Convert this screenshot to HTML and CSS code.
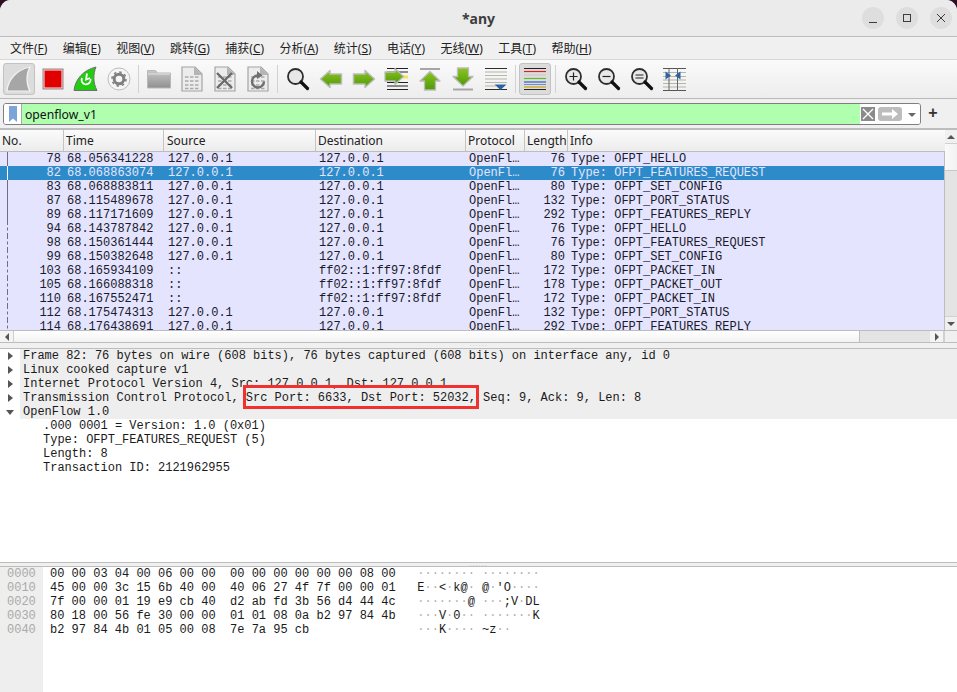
FILE: index.html
```html
<!DOCTYPE html>
<html lang="zh">
<head>
<meta charset="utf-8">
<title>*any</title>
<link rel="stylesheet" href="styles.css">
</head>
<body>
<svg class="defs" width="0" height="0">
  <defs>
    <linearGradient id="gr" x1="0" y1="0" x2="0" y2="1"><stop offset="0" stop-color="#8cc420"/><stop offset="1" stop-color="#4e9a06"/></linearGradient>
    <linearGradient id="fo" x1="0" y1="0" x2="0" y2="1"><stop offset="0" stop-color="#c8c8c8"/><stop offset="1" stop-color="#8f8f8f"/></linearGradient>
    <g id="page">
      <path d="M2 1h13l7 7v17H2z" fill="#ececec" stroke="#a4a4a4" stroke-width="1.200"/>
      <path d="M14 1v8h8z" fill="#b4b4b4"/>
      <path d="M5 11h3.500M10 11h3.500M15 11h3.500M5 15h3.500M10 15h3.500M15 15h3.500M5 19h3.500M10 19h3.500M15 19h3.500M5 22.500h3.500M10 22.500h3.500M15 22.500h3.500" stroke="#a9a9a9" stroke-width="1.500" fill="none"/>
    </g>
    <g id="lens">
      <circle cx="9.500" cy="9.500" r="7.500" fill="#e8e8e8" stroke="#2e2e2e" stroke-width="1.800"/>
      <path d="M15 15l6.500 6.500" stroke="#111" stroke-width="3.200" stroke-linecap="round"/>
    </g>
  </defs>
</svg>
<div class="window">
  <header class="titlebar">
    <h1 class="title">*any</h1>
    <div class="winctl">
      <span class="winbtn"><svg width="22" height="22"><path d="M7 15.500h8" stroke="#3d3d3d" stroke-width="1"/></svg></span>
      <span class="winbtn"><svg width="22" height="22"><rect x="7.500" y="7.500" width="7" height="7" fill="none" stroke="#3d3d3d"/></svg></span>
      <span class="winbtn"><svg width="22" height="22"><path d="M7 7l8 8M15 7l-8 8" stroke="#3d3d3d"/></svg></span>
    </div>
  </header>

  <nav class="menubar">
    <span class="menu">文件(<u>F</u>)</span>
    <span class="menu">编辑(<u>E</u>)</span>
    <span class="menu">视图(<u>V</u>)</span>
    <span class="menu">跳转(<u>G</u>)</span>
    <span class="menu">捕获(<u>C</u>)</span>
    <span class="menu">分析(<u>A</u>)</span>
    <span class="menu">统计(<u>S</u>)</span>
    <span class="menu">电话(<u>Y</u>)</span>
    <span class="menu">无线(<u>W</u>)</span>
    <span class="menu">工具(<u>T</u>)</span>
    <span class="menu">帮助(<u>H</u>)</span>
  </nav>

  <div class="toolbar">
    <span class="tool on"><svg width="28" height="28" viewBox="0 0 28 28"><path d="M2 26C3 15 11 5 25 2c-4 7-4 17 0 24z" fill="#a6a6a6" stroke="#f3f3f3" stroke-width="1.200"/></svg></span>
    <span class="tool"><svg width="24" height="24" viewBox="0 0 24 24"><rect x="2" y="2" width="20" height="20" fill="#e00000" stroke="#8c8c8c" stroke-width="1"/><rect x="3" y="3" width="18" height="18" fill="none" stroke="#eee" stroke-width="1"/></svg></span>
    <span class="tool"><svg width="26" height="26" viewBox="0 0 26 26"><path d="M1 24.500C2 14 10 4 23 1c-3 7-3 16 1 23.500z" fill="#22cc11" stroke="#6e6e6e" stroke-width="1"/><path d="M14 7.500l-1 6 4-1.500" fill="none" stroke="#fff" stroke-width="1.800"/><path d="M17.500 13a4.500 4.500 0 1 1-8.500-1" fill="none" stroke="#fff" stroke-width="1.800"/></svg></span>
    <span class="tool"><svg width="24" height="24" viewBox="0 0 24 24"><circle cx="12" cy="12" r="11" fill="#f6f6f6" stroke="#bcbcbc"/><circle cx="12" cy="12" r="4.800" fill="none" stroke="#808080" stroke-width="3"/><circle cx="12" cy="12" r="7" fill="none" stroke="#808080" stroke-width="1.600" stroke-dasharray="2.500 3"/></svg></span>
    <span class="sep"></span>
    <span class="tool"><svg width="24" height="20" viewBox="0 0 24 20"><path d="M.5 19V1.500h8l2 2.500h13v15z" fill="url(#fo)" stroke="#b8b8b8"/><path d="M1 5h22" stroke="#e4e4e4"/></svg></span>
    <span class="tool"><svg width="24" height="26" viewBox="0 0 24 26"><use href="#page"/></svg></span>
    <span class="tool"><svg width="24" height="26" viewBox="0 0 24 26"><use href="#page"/><path d="M4 7l15 15M19 7L4 22" stroke="#6a6a6a" stroke-width="2.400"/></svg></span>
    <span class="tool"><svg width="24" height="26" viewBox="0 0 24 26"><use href="#page"/><path d="M18 15.500a6 6 0 1 1-6-6" fill="none" stroke="#6f6f6f" stroke-width="2.400"/><path d="M11 5l5.500 4.500L11 13z" fill="#6f6f6f"/></svg></span>
    <span class="sep"></span>
    <span class="tool"><svg width="24" height="24" viewBox="0 0 24 24"><use href="#lens"/></svg></span>
    <span class="tool"><svg width="24" height="20" viewBox="0 0 24 20"><path d="M1.500 10L11 1.500V5h11.500v10H11v3.500z" fill="url(#gr)" stroke="#bcbcbc" stroke-width="1.500" stroke-linejoin="round"/></svg></span>
    <span class="tool"><svg width="24" height="20" viewBox="0 0 24 20"><path d="M22.500 10L13 1.500V5H1.500v10H13v3.500z" fill="url(#gr)" stroke="#bcbcbc" stroke-width="1.500" stroke-linejoin="round"/></svg></span>
    <span class="tool"><svg width="25" height="24" viewBox="0 0 25 24"><path d="M3 1.500h21M3 5h21" stroke="#222"/><path d="M16 8.500h8v3h-8z" fill="#f7e34f"/><path d="M3 15.500h21M3 19h21M3 22.500h21" stroke="#222"/><path d="M1 5h10V1.500l8.500 8-8.500 8V14H1z" fill="url(#gr)" stroke="#bcbcbc" stroke-width="1.300" stroke-linejoin="round"/></svg></span>
    <span class="tool"><svg width="24" height="24" viewBox="0 0 24 24"><path d="M2 2h20" stroke="#a6a6a6" stroke-width="2"/><path d="M12 4.500l10 9.500h-4.500v9h-11v-9H2z" fill="url(#gr)" stroke="#bcbcbc" stroke-width="1.300" stroke-linejoin="round"/></svg></span>
    <span class="tool"><svg width="24" height="24" viewBox="0 0 24 24"><path d="M6.500 1h11v8.500H22L12 19 2 9.500h4.500z" fill="url(#gr)" stroke="#bcbcbc" stroke-width="1.300" stroke-linejoin="round"/><path d="M2 22.500h20" stroke="#a6a6a6" stroke-width="2"/></svg></span>
    <span class="tool"><svg width="24" height="24" viewBox="0 0 24 24"><path d="M1 1.500h22" stroke="#2f2f2f"/><path d="M1 5h22M1 8.500h22M1 12h22M1 15.500h22M1 19h11" stroke="#b5b5a8"/><path d="M1 22.500h22" stroke="#2f2f2f"/><path d="M10.500 17.500h12L16.500 23z" fill="#2a62a8"/></svg></span>
    <span class="sep"></span>
    <span class="tool on"><svg width="24" height="24" viewBox="0 0 24 24"><path d="M1 1.500h22" stroke="#222"/><path d="M1 4.500h22" stroke="#dd2222" stroke-width="1.200"/><path d="M1 8h22" stroke="#c8c8c8"/><path d="M1 11.500h22" stroke="#66bb22" stroke-width="1.200"/><path d="M1 15h22" stroke="#2a62c8" stroke-width="1.200"/><path d="M1 17.500h22" stroke="#6090e0"/><path d="M1 20h22" stroke="#d8a000" stroke-width="1.200"/><path d="M1 22.500h22" stroke="#222"/></svg></span>
    <span class="sep"></span>
    <span class="tool"><svg width="24" height="24" viewBox="0 0 24 24"><use href="#lens"/><path d="M5.500 9.500h8M9.500 5.500v8" stroke="#222" stroke-width="1.200"/></svg></span>
    <span class="tool"><svg width="24" height="24" viewBox="0 0 24 24"><use href="#lens"/><path d="M5.500 9.500h8" stroke="#222" stroke-width="1.200"/></svg></span>
    <span class="tool"><svg width="24" height="24" viewBox="0 0 24 24"><use href="#lens"/><path d="M5.500 8h8M5.500 11h8" stroke="#222" stroke-width="1.200"/></svg></span>
    <span class="tool"><svg width="23" height="23" viewBox="0 0 23 23"><path d="M0 4.500h23M0 8.500h23M0 12h23M0 15.500h23M0 19h23" stroke="#b5b5a8"/><path d="M0 .5h23M0 22.500h23" stroke="#555"/><path d="M6 0v23M14.500 0v23" stroke="#666"/><path d="M2.500 3.500L8 7.500l-5.500 4zM17.500 3.500L12 7.500l5.500 4z" fill="#2a62a8"/></svg></span>
  </div>

  <div class="filterbar">
    <div class="filter">
      <span class="mark"><svg width="10" height="16" viewBox="0 0 10 16"><path d="M1 0h8v16l-4-3.500L1 16z" fill="#7da3d8"/></svg></span>
      <span class="ftext">openflow_v1</span>
      <span class="fbtns">
        <span class="fclear"><svg width="14" height="14"><path d="M2 2l10 10M12 2L2 12" stroke="#fff" stroke-width="1.400"/></svg></span>
        <span class="fapply"><svg width="18" height="10"><path d="M1 3.500h10V0l6 5-6 5V6.500H1z" fill="#fff"/></svg></span>
        <span class="fcaret"></span>
      </span>
    </div>
    <span class="plus">+</span>
  </div>

  <section class="packets">
    <div class="plist">
      <div class="phead">
        <span class="h c1">No.</span><span class="h c2">Time</span><span class="h c3">Source</span><span class="h c4">Destination</span><span class="h c5">Protocol</span><span class="h c6">Length</span><span class="h c7">Info</span>
      </div>
      <div class="prows">
        <div class="r"><span class="c1 n solid">78</span><span class="c2">68.056341228</span><span class="c3">127.0.0.1</span><span class="c4">127.0.0.1</span><span class="c5">OpenFl…</span><span class="c6 n">76</span><span class="c7">Type: OFPT_HELLO</span></div>
        <div class="r sel"><span class="c1 n solid">82</span><span class="c2">68.068863074</span><span class="c3">127.0.0.1</span><span class="c4">127.0.0.1</span><span class="c5">OpenFl…</span><span class="c6 n">76</span><span class="c7">Type: OFPT_FEATURES_REQUEST</span></div>
        <div class="r"><span class="c1 n solid">83</span><span class="c2">68.068883811</span><span class="c3">127.0.0.1</span><span class="c4">127.0.0.1</span><span class="c5">OpenFl…</span><span class="c6 n">80</span><span class="c7">Type: OFPT_SET_CONFIG</span></div>
        <div class="r"><span class="c1 n solid">87</span><span class="c2">68.115489678</span><span class="c3">127.0.0.1</span><span class="c4">127.0.0.1</span><span class="c5">OpenFl…</span><span class="c6 n">132</span><span class="c7">Type: OFPT_PORT_STATUS</span></div>
        <div class="r"><span class="c1 n solid">89</span><span class="c2">68.117171609</span><span class="c3">127.0.0.1</span><span class="c4">127.0.0.1</span><span class="c5">OpenFl…</span><span class="c6 n">292</span><span class="c7">Type: OFPT_FEATURES_REPLY</span></div>
        <div class="r"><span class="c1 n dash">94</span><span class="c2">68.143787842</span><span class="c3">127.0.0.1</span><span class="c4">127.0.0.1</span><span class="c5">OpenFl…</span><span class="c6 n">76</span><span class="c7">Type: OFPT_HELLO</span></div>
        <div class="r"><span class="c1 n dash">98</span><span class="c2">68.150361444</span><span class="c3">127.0.0.1</span><span class="c4">127.0.0.1</span><span class="c5">OpenFl…</span><span class="c6 n">76</span><span class="c7">Type: OFPT_FEATURES_REQUEST</span></div>
        <div class="r"><span class="c1 n dash">99</span><span class="c2">68.150382648</span><span class="c3">127.0.0.1</span><span class="c4">127.0.0.1</span><span class="c5">OpenFl…</span><span class="c6 n">80</span><span class="c7">Type: OFPT_SET_CONFIG</span></div>
        <div class="r"><span class="c1 n dash">103</span><span class="c2">68.165934109</span><span class="c3">::</span><span class="c4">ff02::1:ff97:8fdf</span><span class="c5">OpenFl…</span><span class="c6 n">172</span><span class="c7">Type: OFPT_PACKET_IN</span></div>
        <div class="r"><span class="c1 n dash">105</span><span class="c2">68.166088318</span><span class="c3">::</span><span class="c4">ff02::1:ff97:8fdf</span><span class="c5">OpenFl…</span><span class="c6 n">178</span><span class="c7">Type: OFPT_PACKET_OUT</span></div>
        <div class="r"><span class="c1 n dash">110</span><span class="c2">68.167552471</span><span class="c3">::</span><span class="c4">ff02::1:ff97:8fdf</span><span class="c5">OpenFl…</span><span class="c6 n">172</span><span class="c7">Type: OFPT_PACKET_IN</span></div>
        <div class="r"><span class="c1 n dash">112</span><span class="c2">68.175474313</span><span class="c3">127.0.0.1</span><span class="c4">127.0.0.1</span><span class="c5">OpenFl…</span><span class="c6 n">132</span><span class="c7">Type: OFPT_PORT_STATUS</span></div>
        <div class="r"><span class="c1 n dash">114</span><span class="c2">68.176438691</span><span class="c3">127.0.0.1</span><span class="c4">127.0.0.1</span><span class="c5">OpenFl…</span><span class="c6 n">292</span><span class="c7">Type: OFPT_FEATURES_REPLY</span></div>
      </div>
      <div class="vscroll">
        <span class="sbtn"><i class="tri up"></i></span>
        <span class="vthumb"></span>
        <span class="vtrough"></span>
        <span class="sbtn"><i class="tri down"></i></span>
      </div>
    </div>
    <div class="hscroll">
      <span class="hbtn"><i class="tri left"></i></span>
      <span class="hthumb"></span>
      <span class="htrough"></span>
      <span class="hbtn"><i class="tri right"></i></span>
      <span class="corner"></span>
    </div>
  </section>

  <div class="split top-split">······</div>

  <section class="details">
    <div class="d top closed">Frame 82: 76 bytes on wire (608 bits), 76 bytes captured (608 bits) on interface any, id 0</div>
    <div class="d top closed">Linux cooked capture v1</div>
    <div class="d top closed">Internet Protocol Version 4, Src: 127.0.0.1, Dst: 127.0.0.1</div>
    <div class="d top closed">Transmission Control Protocol, Src Port: 6633, Dst Port: 52032, Seq: 9, Ack: 9, Len: 8</div>
    <div class="d top open">OpenFlow 1.0</div>
    <div class="d sub">.000 0001 = Version: 1.0 (0x01)</div>
    <div class="d sub">Type: OFPT_FEATURES_REQUEST (5)</div>
    <div class="d sub">Length: 8</div>
    <div class="d sub">Transaction ID: 2121962955</div>
    <span class="redbox"></span>
  </section>

  <div class="split bottom-split">······</div>

  <section class="bytes">
    <div class="offs">
      <div>0000</div><div>0010</div><div>0020</div><div>0030</div><div>0040</div>
    </div>
    <div class="hex">
      <div>00 00 03 04 00 06 00 00  00 00 00 00 00 00 08 00   <b>········</b> <b>········</b></div>
      <div>45 00 00 3c 15 6b 40 00  40 06 27 4f 7f 00 00 01   E<b>··</b>&lt;<b>·</b>k@<b>·</b> @<b>·</b>'O<b>····</b></div>
      <div>7f 00 00 01 19 e9 cb 40  d2 ab fd 3b 56 d4 44 4c   <b>·······</b>@ <b>···</b>;V<b>·</b>DL</div>
      <div>80 18 00 56 fe 30 00 00  01 01 08 0a b2 97 84 4b   <b>···</b>V<b>·</b>0<b>··</b> <b>·······</b>K</div>
      <div>b2 97 84 4b 01 05 00 08  7e 7a 95 cb               <b>···</b>K<b>····</b> ~z<b>··</b></div>
    </div>
  </section>
</div>
</body>
</html>
```

FILE: styles.css
```css
* { box-sizing: border-box; }
html, body { margin: 0; height: 100%; }
body { background: #2c0e25; overflow: hidden; font-family: "Noto Sans", "Noto Sans CJK SC", sans-serif; }
.defs { position: absolute; }

.window { width: 957px; height: 692px; display: flex; flex-direction: column; background: #f0f0f0; border-radius: 11px 11px 0 0; overflow: hidden; }

.titlebar { height: 37px; flex: none; display: flex; align-items: center; justify-content: center; background: #ebebeb; border-bottom: 1px solid #bdbdbd; position: relative; }
.title { margin: 0; font: bold 14px "Noto Sans", sans-serif; color: #3d3d3d; }
.winctl { position: absolute; right: 5px; top: 7px; display: flex; gap: 12px; }
.winbtn { width: 22px; height: 22px; border-radius: 50%; background: #dedede; display: block; }
.winbtn svg { display: block; }

.menubar { height: 23px; flex: none; display: flex; align-items: center; gap: 15.4px; padding-left: 10px; background: #f0f0f0; border-bottom: 1px solid #d8d8d8; font: 12px "Noto Sans", "Noto Sans CJK SC", sans-serif; color: #222; }
.menu { white-space: nowrap; }

.toolbar { height: 39px; flex: none; display: flex; align-items: center; padding-left: 3px; background: linear-gradient(#fafafa, #ededed); border-bottom: 1px solid #b9b9b9; }
.tool { width: 33px; height: 32px; flex: none; display: flex; align-items: center; justify-content: center; }
.tool.on { width: 32px; margin-right: 1px; background: #dcdcdc; border: 1px solid #c2c2c2; border-radius: 3px; }
.sep { width: 7px; height: 28px; flex: none; position: relative; }
.sep::after { content: ""; position: absolute; left: 3px; top: 0; bottom: 0; width: 1px; background: #d2d2d2; }

.filterbar { height: 31px; flex: none; display: flex; align-items: flex-start; padding: 4px 0 0 3px; background: #f0f0f0; border-bottom: 2px solid #bdbdbd; }
.filter { width: 918px; height: 22px; display: flex; align-items: stretch; border: 1px solid #7f7f7f; border-radius: 3px; background: #fff; overflow: hidden; }
.mark { width: 18px; flex: none; display: flex; align-items: center; justify-content: center; background: #fff; border-right: 1px solid #aaa; }
.ftext { flex: 1; padding: 1px 0 0 3px; background: #afffaf; font: 12.2px/19px "Noto Sans", sans-serif; color: #111; }
.fbtns { width: 60px; flex: none; display: flex; align-items: center; background: #fff; padding-left: 1px; }
.fclear { width: 14px; height: 14px; background: #8a8a8a; display: block; }
.fclear svg, .fapply svg { display: block; }
.fapply { width: 24px; height: 14px; margin-left: 3px; background: #bdbdbd; border-radius: 3px; display: flex; align-items: center; justify-content: center; }
.fcaret { width: 0; height: 0; margin-left: 6px; margin-top: 1px; border: 4px solid transparent; border-top: 4px solid #666; border-bottom: 0; }
.plus { width: 24px; text-align: center; font: bold 16px/20px "Liberation Sans", sans-serif; color: #333; }

.packets { flex: none; }
.plist { position: relative; height: 200px; padding-right: 12px; background: #fff; }
.phead { height: 22px; display: flex; background: linear-gradient(#fbfbfb, #ececec); border-bottom: 1px solid #bdbdbd; font: 12px/21px "Noto Sans", sans-serif; color: #222; }
.h { padding-left: 2px !important; border-right: 1px solid #c4c4c4; text-align: left !important; white-space: nowrap; }
.h.c3 { padding-left: 3px !important; }
.h.c7 { border-right: 0; }
.prows { height: 178px; overflow: hidden; background: #e4e4ff; border-right: 1px solid #bdbdbd; font: 12px/14px "Liberation Mono", monospace; color: #1a1a2a; }
.r { height: 14px; display: flex; white-space: pre; }
.r.sel { background: #2e8bc9; color: #e4e4ff; }
.c1 { width: 64px; flex: none; position: relative; }
.c2 { width: 100px; flex: none; padding-left: 3px; }
.c3 { width: 152px; flex: none; padding-left: 4px; }
.c4 { width: 150px; flex: none; padding-left: 3px; }
.c5 { width: 59px; flex: none; padding-left: 3px; overflow: hidden; }
.c6 { width: 43px; flex: none; }
.c7 { flex: 1; padding-left: 3px; }
.n { text-align: right; padding-right: 3px; }
.solid::before, .dash::before { content: ""; position: absolute; left: 7px; top: 0; bottom: 0; border-left: 1px solid #6d6d8c; }
.dash::before { border-left-style: dashed; }
.sel .solid::before { border-left-color: #fff; }

.vscroll { position: absolute; right: 0; top: 0; bottom: 0; width: 12px; display: flex; flex-direction: column; background: #e4e4e4; }
.sbtn { height: 14px; flex: none; display: flex; align-items: center; justify-content: center; background: #f0f0f0; border-bottom: 1px solid #d0d0d0; }
.sbtn:last-child { border-top: 1px solid #d0d0d0; border-bottom: 0; }
.vthumb { height: 27px; flex: none; background: linear-gradient(90deg, #fafafa, #f2f2f2); border-bottom: 1px solid #c8c8c8; }
.vtrough { flex: 1; }
.tri { display: block; width: 0; height: 0; border: 4px solid transparent; }
.tri.up { border-bottom-color: #555; border-top: 0; }
.tri.down { border-top-color: #555; border-bottom: 0; }
.tri.left { border-right-color: #555; border-left: 0; }
.tri.right { border-left-color: #555; border-right: 0; }

.hscroll { height: 13px; display: flex; background: #e4e4e4; border-top: 1px solid #bdbdbd; border-bottom: 1px solid #bdbdbd; }
.hbtn { width: 14px; flex: none; display: flex; align-items: center; justify-content: center; background: #f4f4f4; border-right: 1px solid #d0d0d0; }
.hthumb { width: 846px; flex: none; background: linear-gradient(#fff, #f2f2f2); border-right: 1px solid #bdbdbd; }
.htrough { flex: 1; }
.corner { width: 13px; flex: none; background: #f0f0f0; border-left: 1px solid #d0d0d0; }

.split { flex: none; text-align: center; overflow: hidden; font: 6px/4px "Liberation Sans", sans-serif; letter-spacing: 1px; color: #a0a0a0; background: #f0f0f0; }
.top-split { height: 6px; border-bottom: 1px solid #bdbdbd; }
.bottom-split { height: 5px; border-top: 1px solid #bdbdbd; border-bottom: 1px solid #bdbdbd; }

.details { position: relative; flex: none; height: 213px; background: #fff; font: 12px/14px "Liberation Mono", monospace; color: #1a1a1a; }
.d { height: 14px; white-space: pre; letter-spacing: -0.012px; }
.top { margin-left: 20px; padding-left: 3px; background: #eeeeee; position: relative; }
.sub { padding-left: 43px; }
.top::before { content: ""; position: absolute; left: -12px; }
.closed::before { top: 3px; border: 4px solid transparent; border-left: 5px solid #555; border-right: 0; }
.open::before { top: 5px; left: -14px; border: 4px solid transparent; border-top: 5px solid #555; border-bottom: 0; }
.redbox { position: absolute; left: 243px; top: 36px; width: 236px; height: 24px; border: 3px solid #f23030; }

.bytes { flex: 1; display: flex; background: #fff; font: 12px/14px "Liberation Mono", monospace; color: #1a1a1a; }
.offs { width: 43px; flex: none; padding-left: 7px; background: #eeeeee; color: #aaa; }
.hex { padding-left: 7px; }
.hex div { white-space: pre; height: 14px; }
.hex b { font-weight: normal; color: #b0b0b0; }
```
